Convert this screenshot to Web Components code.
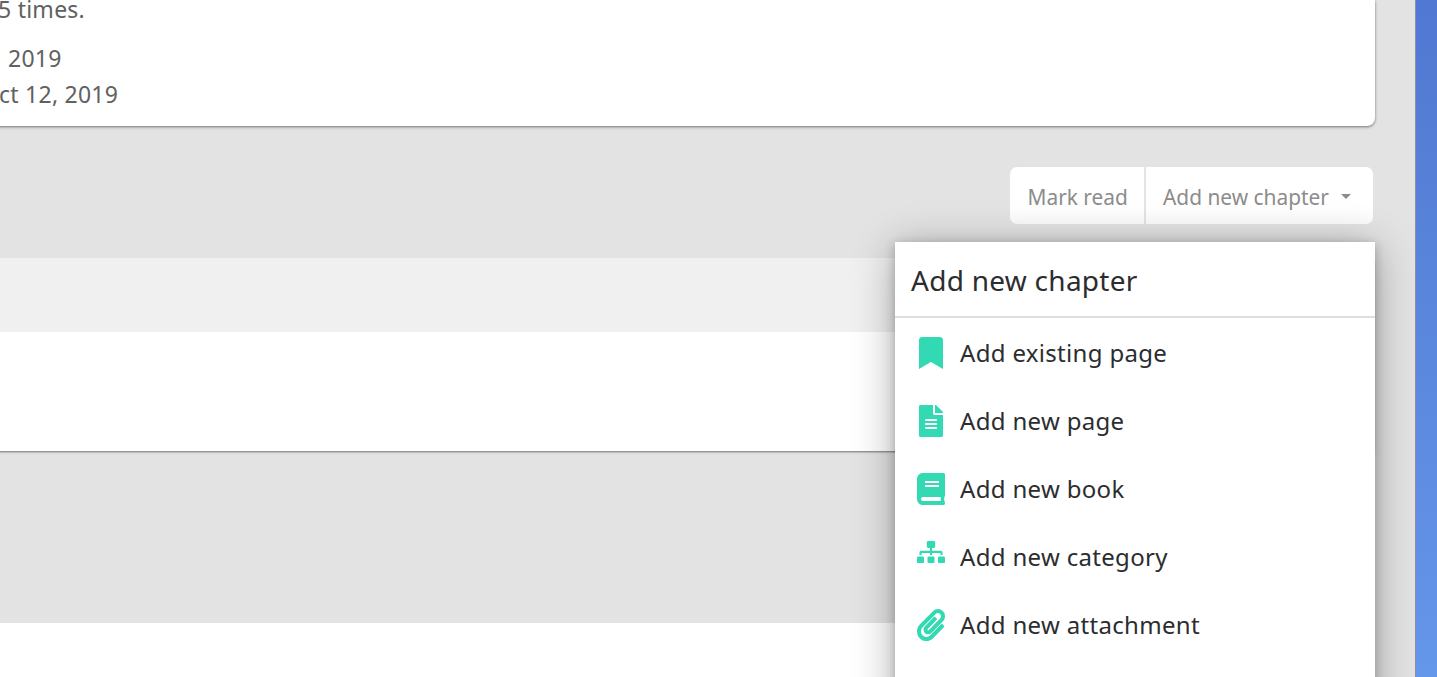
<!DOCTYPE html>
<html lang="en"><head><meta charset="utf-8"><title>Chapter</title>
<style>
html,body{margin:0;height:677px;overflow:hidden;background:#e3e3e3;font-family:"Noto Sans",sans-serif}
</style></head><body>
<app-shell>
  <summary-card>
    <p-line style="--shift:8px">5 times.</p-line>
    <p-line style="--shift:18px;--gap:13px">2019</p-line>
    <p-line style="--shift:9px">ct 12, 2019</p-line>
  </summary-card>
  <tool-bar>
    <tool-button>Mark read</tool-button>
    <tool-button caret>Add new chapter</tool-button>
  </tool-bar>
  <chapter-panel></chapter-panel>
  <blank-panel></blank-panel>
  <add-menu slot="overlay" heading="Add new chapter">
    <menu-row icon="bookmark">Add existing page</menu-row>
    <menu-row icon="file">Add new page</menu-row>
    <menu-row icon="book">Add new book</menu-row>
    <menu-row icon="sitemap">Add new category</menu-row>
    <menu-row icon="clip">Add new attachment</menu-row>
    <menu-row icon="link"></menu-row>
  </add-menu>
</app-shell>
<script>
const def=(name,css,html,extra={})=>{
  customElements.define(name,class extends HTMLElement{
    constructor(){super();this.attachShadow({mode:'open'}).innerHTML=`<style>${css}</style>${html}`;}
    connectedCallback(){extra.init&&extra.init.call(this);}
  });
};
const ICONS={
 bookmark:['0 0 384 512','M0 512V48C0 21.49 21.49 0 48 0h288c26.51 0 48 21.49 48 48v464L192 400 0 512z'],
 file:['0 0 384 512','M224 136V0H24C10.7 0 0 10.7 0 24v464c0 13.3 10.7 24 24 24h336c13.3 0 24-10.7 24-24V160H248c-13.2 0-24-10.8-24-24zm64 236c0 6.6-5.4 12-12 12H108c-6.6 0-12-5.4-12-12v-8c0-6.6 5.4-12 12-12h168c6.6 0 12 5.4 12 12v8zm0-64c0 6.6-5.4 12-12 12H108c-6.6 0-12-5.4-12-12v-8c0-6.6 5.4-12 12-12h168c6.6 0 12 5.4 12 12v8zm0-72v8c0 6.6-5.4 12-12 12H108c-6.6 0-12-5.4-12-12v-8c0-6.6 5.4-12 12-12h168c6.6 0 12 5.4 12 12zm96-114.1v6.1H256V0h6.1c6.4 0 12.5 2.5 17 7l97.9 98c4.5 4.5 7 10.6 7 16.9z'],
 book:['0 0 448 512','M448 360V24c0-13.3-10.7-24-24-24H96C43 0 0 43 0 96v320c0 53 43 96 96 96h328c13.3 0 24-10.7 24-24v-16c0-7.5-3.5-14.3-8.9-18.7-4.2-15.4-4.2-59.3 0-74.7 5.4-4.3 8.9-11.1 8.9-18.6zM128 134c0-3.3 2.7-6 6-6h212c3.3 0 6 2.7 6 6v20c0 3.3-2.7 6-6 6H134c-3.3 0-6-2.7-6-6v-20zm0 64c0-3.3 2.7-6 6-6h212c3.3 0 6 2.7 6 6v20c0 3.3-2.7 6-6 6H134c-3.3 0-6-2.7-6-6v-20zm253.4 250H96c-17.7 0-32-14.3-32-32 0-17.6 14.4-32 32-32h285.4c-1.9 17.1-1.9 46.9 0 64z'],
 sitemap:['0 0 640 512','M128 352H32c-17.67 0-32 14.33-32 32v96c0 17.67 14.33 32 32 32h96c17.67 0 32-14.33 32-32v-96c0-17.67-14.33-32-32-32zm-24-80h192v48h48v-48h192v48h48v-57.59c0-21.17-17.23-38.41-38.41-38.41H344v-64h40c17.67 0 32-14.33 32-32V32c0-17.67-14.33-32-32-32H256c-17.67 0-32 14.33-32 32v96c0 17.67 14.33 32 32 32h40v64H94.41C73.23 224 56 241.23 56 262.41V320h48v-48zm264 80h-96c-17.67 0-32 14.33-32 32v96c0 17.67 14.33 32 32 32h96c17.67 0 32-14.33 32-32v-96c0-17.67-14.33-32-32-32zm240 0h-96c-17.67 0-32 14.33-32 32v96c0 17.67 14.33 32 32 32h96c17.67 0 32-14.33 32-32v-96c0-17.67-14.33-32-32-32z'],
 clip:['0 0 448 512','M43.246 466.142c-58.43-60.289-57.341-157.511 1.386-217.581L254.392 34c44.316-45.332 116.351-45.336 160.671 0 43.89 44.894 43.943 117.329 0 162.276L232.214 383.128c-29.855 30.537-78.633 30.111-107.982-.998-28.275-29.97-27.368-77.473 1.452-106.953l143.743-146.835c6.182-6.314 16.312-6.422 22.626-.241l22.861 22.379c6.315 6.182 6.422 16.312.241 22.626L171.427 319.927c-4.932 5.045-5.236 13.428-.648 18.292 4.372 4.634 11.245 4.711 15.688.165l182.849-186.851c19.613-20.062 19.613-52.725-.011-72.798-19.189-19.627-49.957-19.637-69.154 0L90.39 293.295c-34.763 35.56-35.299 93.12-1.191 128.313 34.01 35.093 88.985 35.137 123.058.286l172.06-175.999c6.177-6.319 16.307-6.433 22.626-.256l22.877 22.364c6.319 6.177 6.434 16.307.256 22.626l-172.06 175.998c-59.576 60.938-155.943 60.216-214.77-.485z'],
 link:['0 0 448 544','M130 0h60v544h-60z']
};
def('app-shell',`
 :host{display:flex;height:677px;overflow:hidden;position:relative}
 .main{flex:1;min-width:0;padding-right:40px;box-sizing:border-box;display:flex;flex-direction:column;position:relative}
 .side{width:22px;flex:none;background:linear-gradient(180deg,#5178d2 0%,#6496ea 100%);border-left:1px solid #8a8fa0;box-sizing:border-box;position:relative;z-index:1}
 .over{position:absolute;left:895px;top:242px;width:480px}
`,`<div class="main"><slot></slot><div class="over"><slot name="overlay"></slot></div></div><div class="side"></div>`);
def('summary-card',`
 :host{display:block;height:126px;box-sizing:border-box;background:#fff;border-radius:0 0 8px 8px;box-shadow:0 1px 3px rgba(0,0,0,.5);margin-left:-10px;overflow:hidden}
`,`<slot></slot>`);
def('p-line',`
 :host{display:block;font:23px/36px "Noto Sans",sans-serif;letter-spacing:.25px;color:#616161;margin-left:var(--shift,0);margin-top:var(--gap,0);white-space:nowrap}
 :host(:first-child){margin-top:-9px}
`,`<slot></slot>`);
def('tool-bar',`
 :host{display:flex;justify-content:flex-end;margin:41px 2px 34px 0;height:57px}
 .g{display:flex;border-radius:7px;overflow:hidden;background:linear-gradient(180deg,#fff 70%,#fbfbfb 100%)}
`,`<div class="g"><slot></slot></div>`);
def('tool-button',`
 :host{display:flex;align-items:center;padding:2px 17px 0;color:#8c8c8c;font:20.9px "Noto Sans",sans-serif;white-space:nowrap}
 :host(:not(:last-child)){border-right:2px solid #e3e3e3;padding-right:16px}
 :host([caret]){padding-right:22px}
 .c{display:none;width:0;height:0;border:5px solid transparent;border-top-color:#8c8c8c;border-bottom:0;margin:0 0 0 12px}
 :host([caret]) .c{display:block}
`,`<slot></slot><span class="c"></span>`);
def('chapter-panel',`
 :host{display:block;height:193px;margin-left:-10px;background:#fff;box-shadow:0 2px 2px -1px rgba(0,0,0,.5)}
 .h{height:74px;background:#f0f0f0}
`,`<div class="h"></div>`);
def('blank-panel',`
 :host{display:block;flex:1;margin-top:172px;background:#fff}
`,``);
def('add-menu',`
 :host{display:block;background:#fff;box-shadow:0 6px 40px rgba(0,0,0,.32),0 2px 10px rgba(0,0,0,.22);height:500px;color:#2b2d30}
 h2{margin:0;font:400 28px/76px "Noto Sans",sans-serif;height:74px;letter-spacing:.27px;padding-left:16px;border-bottom:2px solid #dedede}
 .b{padding-top:1px}
`,`<h2></h2><div class="b"><slot></slot></div>`,{init(){this.shadowRoot.querySelector('h2').textContent=this.getAttribute('heading');}});
def('menu-row',`
 :host{display:flex;align-items:center;height:68px;padding-left:22px;font:24px/66px "Noto Sans",sans-serif;letter-spacing:.32px;white-space:nowrap}
 .i{width:28px;display:flex;justify-content:center;margin-right:15px;flex:none}
 :host([icon=sitemap]) .i{margin-top:-10px}
 svg{fill:#33d9b2;display:block}
`,`<span class="i"></span><slot></slot>`,{init(){
  const k=this.getAttribute('icon'),[vb,d]=ICONS[k],[,,w,h]=vb.split(' ').map(Number);
  const width=w/h*32>28?28:w/h*32, height=width*h/w;
  this.shadowRoot.querySelector('.i').innerHTML=`<svg viewBox="${vb}" width="${width}" height="${height}"><path d="${d}"/></svg>`;
}});
</script>
</body></html>
